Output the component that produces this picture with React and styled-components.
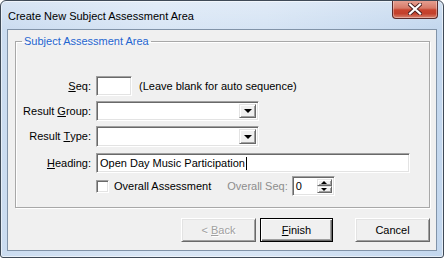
import React from "react";
import styled, { createGlobalStyle, css } from "styled-components";

const Global = createGlobalStyle`
  html, body { margin: 0; padding: 0; background: #ffffff; }
  body { width: 444px; height: 258px; overflow: hidden; }
  * { box-sizing: border-box; }
`;

const Window = styled.div`
  width: 444px;
  height: 258px;
  display: flex;
  flex-direction: column;
  border: 1px solid #3f4a57;
  border-radius: 6px 6px 3px 3px;
  background:
    linear-gradient(180deg, rgba(255,255,255,0.25) 0px, rgba(255,255,255,0) 28px),
    linear-gradient(90deg, #cbdcf0 0%, #d9e6f5 35%, #d6e4f4 60%, #c3d7ee 100%);
  box-shadow: inset 0 0 0 1px rgba(255,255,255,0.55);
  font-family: "Liberation Sans", Arial, sans-serif;
  font-size: 11px;
  color: #000;
  overflow: hidden;
`;

const TitleBar = styled.div`
  height: 28px;
  flex: none;
  display: flex;
  align-items: flex-start;
  justify-content: space-between;
  padding-left: 7px;
  padding-right: 5px;
`;

const Title = styled.div`
  font-family: "Liberation Sans", Arial, sans-serif;
  font-size: 11px;
  line-height: 13px;
  margin-top: 9px;
  color: #000;
`;

const CloseButton = styled.div`
  width: 46px;
  height: 19px;
  margin-top: -1px;
  border: 1px solid #5a2a2a;
  border-top: none;
  border-radius: 0 0 4px 4px;
  background: linear-gradient(180deg, #e8a496 0%, #d77a68 45%, #c8442f 55%, #c3402c 75%, #d8826e 100%);
  box-shadow: inset 0 0 0 1px rgba(255,255,255,0.35);
  display: flex;
  align-items: center;
  justify-content: center;
`;

const Client = styled.div`
  flex: 1;
  margin: 0 6px 6px 6px;
  border: 1px solid #8193a8;
  background: #f0f0f0;
  display: flex;
  flex-direction: column;
  padding: 5px 6px 0 7px;
`;

const GroupBox = styled.fieldset`
  margin: 0;
  padding: 0 0 11px 0;
  border: 1px solid #a8a8a8;
  box-shadow: inset 1px 1px 0 #ffffff, 1px 1px 0 #ffffff;
  border-radius: 0;
  min-width: 0;
`;

const Legend = styled.legend`
  margin-left: 6px;
  padding: 0 2px 0 2px;
  color: #1f66d1;
  font-size: 11px;
  line-height: 13px;
`;

const Form = styled.div`
  display: grid;
  grid-template-columns: 75px 1fr;
  grid-template-rows: 25px 25px 27px 23px 20px;
  column-gap: 5px;
  margin-top: 28px;
`;

const Label = styled.label`
  display: flex;
  height: 20px;
  align-items: center;
  justify-content: flex-end;
  white-space: nowrap;
`;

const Field = styled.div`
  display: flex;
  align-items: flex-start;
  min-width: 0;
`;

const sunken = css`
  border-style: solid;
  border-width: 1px;
  border-color: #a0a0a0 #ffffff #ffffff #a0a0a0;
  box-shadow: inset 1px 1px 0 #696969, inset -1px -1px 0 #e3e3e3;
  background: #fff;
`;

const TextBox = styled.div`
  ${sunken}
  width: ${(p) => p.$w}px;
  height: 20px;
  display: flex;
  align-items: center;
  padding-left: 3px;
  white-space: nowrap;
  overflow: hidden;
`;

const Caret = styled.span`
  display: inline-block;
  width: 1px;
  height: 13px;
  background: #000;
  margin-left: 1px;
`;

const Hint = styled.span`
  margin-left: 7px;
  height: 20px;
  display: flex;
  align-items: center;
  white-space: nowrap;
`;

const Combo = styled.div`
  ${sunken}
  width: ${(p) => p.$w}px;
  height: ${(p) => p.$h || 20}px;
  display: flex;
  justify-content: flex-end;
  padding: 2px;
`;

const raised = css`
  background: #f0f0f0;
  border-style: solid;
  border-width: 1px;
  border-color: #e3e3e3 #696969 #696969 #e3e3e3;
  box-shadow: inset 1px 1px 0 #ffffff, inset -1px -1px 0 #a0a0a0;
`;

const DropButton = styled.div`
  ${raised}
  width: 17px;
  height: 100%;
  display: flex;
  align-items: center;
  justify-content: center;
`;

const Arrow = styled.span`
  width: 0;
  height: 0;
  border-left: ${(p) => (p.$small ? 3 : 4)}px solid transparent;
  border-right: ${(p) => (p.$small ? 3 : 4)}px solid transparent;
  ${(p) =>
    p.$up
      ? css`border-bottom: ${p.$small ? 3 : 4}px solid #000;`
      : css`border-top: ${p.$small ? 3 : 4}px solid #000;`}
`;

const CheckRow = styled.div`
  display: flex;
  align-items: center;
  height: 20px;
`;

const CheckBox = styled.span`
  width: 13px;
  height: 13px;
  ${sunken}
  flex: none;
`;

const CheckLabel = styled.span`
  margin-left: 5px;
  white-space: nowrap;
`;

const SeqGroup = styled.div`
  display: flex;
  align-items: center;
  margin-left: 16px;
  gap: 4px;
  color: #8d8d8d;
`;

const Spin = styled.div`
  ${sunken}
  width: 43px;
  height: 20px;
  display: flex;
  align-items: stretch;
  padding: 2px;
  color: #000;
`;

const SpinText = styled.span`
  flex: 1;
  display: flex;
  align-items: center;
  padding-left: 1px;
`;

const SpinButtons = styled.div`
  width: 15px;
  display: flex;
  flex-direction: column;
`;

const SpinBtn = styled.div`
  ${raised}
  flex: 1;
  display: flex;
  align-items: center;
  justify-content: center;
`;

const ButtonRow = styled.div`
  display: flex;
  justify-content: flex-end;
  align-items: center;
  margin-top: 10px;
`;

const Button = styled.div`
  width: ${(p) => p.$w || 75}px;
  height: 24px;
  margin-left: ${(p) => p.$ml || 0}px;
  display: flex;
  align-items: center;
  justify-content: center;
  background: #f0f0f0;
  border-style: solid;
  border-width: 1px;
  border-color: ${(p) => (p.$default ? "#000" : "#ffffff #696969 #696969 #ffffff")};
  box-shadow: ${(p) =>
    p.$default
      ? "inset 1px 1px 0 #ffffff, inset -1px -1px 0 #696969, inset -2px -2px 0 #a0a0a0"
      : "inset 1px 1px 0 #e3e3e3, inset -1px -1px 0 #a0a0a0"};
  color: ${(p) => (p.$disabled ? "#a0a0a0" : "#000")};
  text-shadow: ${(p) => (p.$disabled ? "1px 1px 0 #ffffff" : "none")};
  white-space: pre;
`;

const U = styled.span`
  text-decoration: underline;
  text-underline-offset: 1px;
`;

export default function App() {
  return (
    <>
      <Global />
      <Window>
        <TitleBar>
          <Title>Create New Subject Assessment Area</Title>
          <CloseButton>
            <svg width="14" height="12" viewBox="0 0 14 12">
              <path
                d="M2 1.5 L12 10.5 M12 1.5 L2 10.5"
                stroke="#4a2020"
                strokeWidth="4"
                strokeLinecap="square"
              />
              <path
                d="M2 1.5 L12 10.5 M12 1.5 L2 10.5"
                stroke="#ffffff"
                strokeWidth="2.2"
                strokeLinecap="square"
              />
            </svg>
          </CloseButton>
        </TitleBar>
        <Client>
          <GroupBox>
            <Legend>Subject Assessment Area</Legend>
            <Form>
              <Label>
                <U>S</U>eq:
              </Label>
              <Field>
                <TextBox $w={36} />
                <Hint>(Leave blank for auto sequence)</Hint>
              </Field>

              <Label>
                Result&nbsp;<U>G</U>roup:
              </Label>
              <Field>
                <Combo $w={163}>
                  <DropButton>
                    <Arrow />
                  </DropButton>
                </Combo>
              </Field>

              <Label>
                Result&nbsp;<U>T</U>ype:
              </Label>
              <Field>
                <Combo $w={163} $h={21}>
                  <DropButton>
                    <Arrow />
                  </DropButton>
                </Combo>
              </Field>

              <Label>
                <U>H</U>eading:
              </Label>
              <Field>
                <TextBox $w={314}>
                  Open Day Music Participation
                  <Caret />
                </TextBox>
              </Field>

              <span />
              <CheckRow>
                <CheckBox />
                <CheckLabel>Overall Assessment</CheckLabel>
                <SeqGroup>
                  <span>Overall Seq:</span>
                  <Spin>
                    <SpinText>0</SpinText>
                    <SpinButtons>
                      <SpinBtn>
                        <Arrow $up $small />
                      </SpinBtn>
                      <SpinBtn>
                        <Arrow $small />
                      </SpinBtn>
                    </SpinButtons>
                  </Spin>
                </SeqGroup>
              </CheckRow>
            </Form>
          </GroupBox>
          <ButtonRow>
            <Button $disabled>
              {"< "}
              <U>B</U>ack
            </Button>
            <Button $default $ml={4} $w={73}>
              <U>F</U>inish
            </Button>
            <Button $ml={22}>Cancel</Button>
          </ButtonRow>
        </Client>
      </Window>
    </>
  );
}
